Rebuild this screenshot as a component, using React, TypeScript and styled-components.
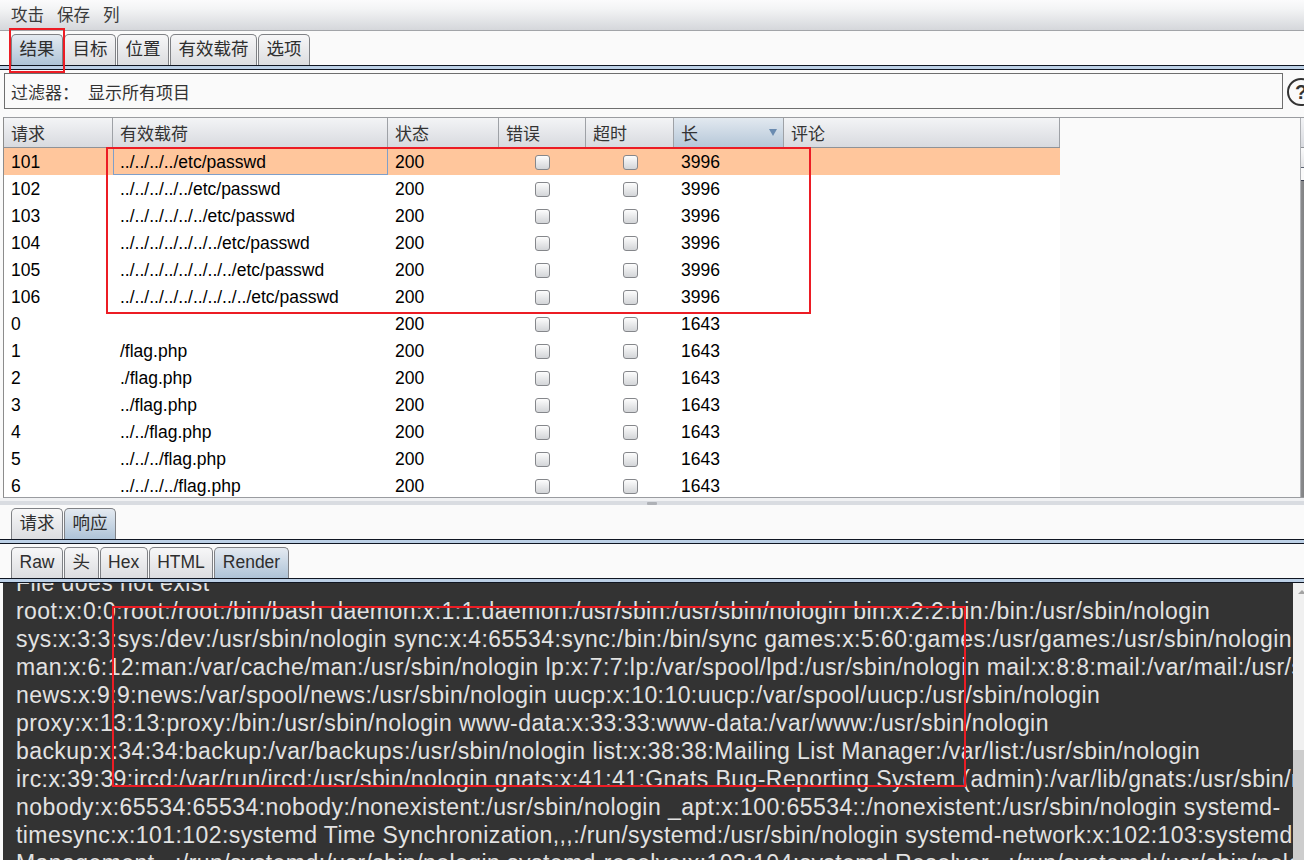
import React from 'react';
import styled, { createGlobalStyle } from 'styled-components';

const SANS = `"Liberation Sans", Arial, "Noto Sans CJK SC", sans-serif`;
const CJK = `"Noto Sans CJK SC", "Liberation Sans", sans-serif`;

const GlobalStyle = createGlobalStyle`
	html, body {
		margin: 0;
		padding: 0;
		background: #fafafa;
		overflow: hidden;
	}
	* {
		box-sizing: border-box;
	}
`;

const Page = styled.div`
	position: relative;
	width: 1304px;
	height: 860px;
	overflow: hidden;
	display: flex;
	flex-direction: column;
	background: #fafafa;
	font-family: ${SANS};
	color: #000;
`;

const MenuBar = styled.div`
	flex-shrink: 0;
	height: 31px;
	display: flex;
	align-items: center;
	gap: 13px;
	padding: 0 0 1px 11px;
	background: linear-gradient(#fbfbfc 0%, #f3f4f5 30%, #d5d7db 100%);
	border-bottom: 1px solid #a2a4a8;
	font-family: ${CJK};
	font-size: 16.5px;
	line-height: 1;
	color: #3a3a3a;
`;

const TabStrip = styled.div`
	flex-shrink: 0;
	display: flex;
	align-items: flex-end;
	gap: 1px;
	padding: ${(p: { $top: number }) => p.$top}px 0 0 11px;
`;

const Tab = styled.div<{ $active?: boolean }>`
	height: 31px;
	padding: 0 7.5px;
	display: flex;
	align-items: center;
	border: 1px solid #7f8185;
	border-bottom: none;
	border-radius: 5px 5px 0 0;
	background: ${(p) =>
		p.$active
			? 'linear-gradient(#e4eaf1, #aec3d7)'
			: 'linear-gradient(#f7f7f8, #dcdde0)'};
	font-size: 17.5px;
	line-height: 1;
	color: #2e2e2e;
	white-space: nowrap;
`;

const TabRule = styled.div`
	flex-shrink: 0;
	height: 5px;
	background: #bcd0e6;
	border-top: 1px solid #101622;
	border-bottom: 1px solid #101622;
`;

const FilterRow = styled.div`
	flex-shrink: 0;
	height: 47px;
	display: flex;
	align-items: flex-start;
	gap: 4px;
	padding: 3px 0 0 4px;
`;

const FilterBox = styled.div`
	flex-shrink: 0;
	width: 1279px;
	height: 36px;
	display: flex;
	align-items: center;
	gap: 9px;
	padding-left: 6px;
	border: 1px solid #6e6e6e;
	background: #fafafa;
	font-family: ${CJK};
	font-size: 17px;
	color: #333;
`;

const HelpButton = styled.div`
	flex-shrink: 0;
	width: 28px;
	height: 28px;
	margin-top: 5px;
	border: 2px solid #333;
	border-radius: 50%;
	display: flex;
	align-items: center;
	justify-content: center;
	font-size: 20px;
	font-weight: bold;
	color: #333;
`;

const TableFrame = styled.div`
	flex-shrink: 0;
	align-self: flex-start;
	width: 1314px;
	height: 381px;
	margin-left: 3px;
	display: flex;
	border-top: 1px solid #9a9ca0;
	border-left: 1px solid #8c8c8c;
	border-bottom: 1px solid #9a9ca0;
`;

const Viewport = styled.div`
	flex: 1;
	overflow: hidden;
	background: #fafafa;
`;

const COLS = '109px 275px 111px 87px 88px 110px 276px';

const Table = styled.div`
	width: 1056px;
	background: #fff;
`;

const HeaderRow = styled.div`
	display: grid;
	grid-template-columns: ${COLS};
	height: 30px;
	border-bottom: 1px solid #8f9297;
	background: #fafafa;
`;

const HeaderCell = styled.div<{ $sorted?: boolean }>`
	display: flex;
	align-items: center;
	justify-content: space-between;
	padding: 0 6px 0 7px;
	border-right: 1px solid #9ea1a6;
	background: ${(p) =>
		p.$sorted
			? 'linear-gradient(#e2e9f0, #b6c7d8)'
			: 'linear-gradient(#f3f4f6, #d8dadf)'};
	font-family: ${CJK};
	font-size: 17px;
	color: #333;
`;

const SortArrow = styled.span`
	width: 0;
	height: 0;
	border-left: 4.5px solid transparent;
	border-right: 4.5px solid transparent;
	border-top: 7px solid #6a8bb0;
`;

const Row = styled.div<{ $selected?: boolean }>`
	display: grid;
	grid-template-columns: ${COLS};
	height: 27px;
	background: ${(p) => (p.$selected ? '#ffc69c' : '#fff')};
	font-size: 17.5px;
	line-height: 27px;
	white-space: nowrap;
`;

const Cell = styled.div<{ $focus?: boolean; $center?: boolean }>`
	display: flex;
	align-items: center;
	justify-content: ${(p) => (p.$center ? 'center' : 'flex-start')};
	padding: 2px 0 0 ${(p) => (p.$center ? 0 : 7)}px;
	overflow: hidden;
	box-shadow: ${(p) => (p.$focus ? 'inset 0 0 0 1px #7f9fc9' : 'none')};
`;

const CheckBox = styled.span`
	width: 15px;
	height: 15px;
	border: 1px solid #85878b;
	border-radius: 3px;
	background: linear-gradient(#fdfdfd, #d3d5d8);
`;

const TableScroll = styled.div`
	width: 17px;
	flex-shrink: 0;
	display: flex;
	flex-direction: column;
	border-left: 1px solid #b0b2b6;
`;

const ScrollCorner = styled.div`
	height: 30px;
	background: linear-gradient(#f3f4f6, #d8dadf);
	border-bottom: 1px solid #8f9297;
`;

const ScrollButton = styled.div`
	height: 20px;
	background: linear-gradient(#fbfbfb, #e2e3e6);
	border-bottom: 1px solid #5a6270;
`;

const ScrollThumb = styled.div`
	flex: 1;
	margin: 12px 0 0;
	background: linear-gradient(90deg, #8a8b8d, #5d5e60);
	border-top: 1px solid #3b4150;
`;

const Splitter = styled.div`
	flex-shrink: 0;
	height: 7px;
	display: flex;
	justify-content: center;
	align-items: center;
	background: #d9dce1;
	border-top: 3px solid #f0f1f3;
`;

const Grip = styled.span`
	width: 10px;
	height: 3px;
	border-radius: 1px;
	background: #aeb1b6;
`;

const RenderPane = styled.div`
	flex: 1;
	align-self: flex-start;
	width: 1307px;
	margin-left: 3px;
	display: flex;
	min-height: 0;
`;

const RenderBody = styled.div`
	width: 1290px;
	flex-shrink: 0;
	overflow: hidden;
	background: #333333;
	padding-left: 13px;
	font-size: 23px;
	letter-spacing: 0.43px;
	line-height: 28px;
	color: #e2e2e2;
	white-space: nowrap;
`;

const RenderText = styled.div`
	margin-top: -14px;
`;

const RenderScroll = styled.div`
	width: 17px;
	flex-shrink: 0;
	display: flex;
	flex-direction: column;
	justify-content: space-between;
	background: #f0f0f0;
`;

const UpArrow = styled.div`
	height: 17px;
	display: flex;
	align-items: center;
	justify-content: center;

	&::before {
		content: '';
		border-left: 4px solid transparent;
		border-right: 4px solid transparent;
		border-bottom: 4px solid #a3a3a3;
	}
`;

const RenderThumb = styled.div`
	height: 110px;
	margin: 0 2px 0 0;
	background: #cdcdcd;
`;

const Annotation = styled.div`
	position: absolute;
	border: 2px solid #ec1c24;
	pointer-events: none;
`;

const passwdRows = [4, 5, 6, 7, 8, 9].map((n, i) => ({
	id: String(101 + i),
	payload: '../'.repeat(n) + 'etc/passwd',
	length: '3996',
}));

const flagRows = [
	'',
	'/flag.php',
	'./flag.php',
	'../flag.php',
	'../../flag.php',
	'../../../flag.php',
	'../../../../flag.php',
].map((payload, i) => ({ id: String(i), payload, length: '1643' }));

const rows = [...passwdRows, ...flagRows];

const renderLines = [
	'File does not exist',
	'root:x:0:0:root:/root:/bin/bash daemon:x:1:1:daemon:/usr/sbin:/usr/sbin/nologin bin:x:2:2:bin:/bin:/usr/sbin/nologin',
	'sys:x:3:3:sys:/dev:/usr/sbin/nologin sync:x:4:65534:sync:/bin:/bin/sync games:x:5:60:games:/usr/games:/usr/sbin/nologin',
	'man:x:6:12:man:/var/cache/man:/usr/sbin/nologin lp:x:7:7:lp:/var/spool/lpd:/usr/sbin/nologin mail:x:8:8:mail:/var/mail:/usr/sbin/nologin',
	'news:x:9:9:news:/var/spool/news:/usr/sbin/nologin uucp:x:10:10:uucp:/var/spool/uucp:/usr/sbin/nologin',
	'proxy:x:13:13:proxy:/bin:/usr/sbin/nologin www-data:x:33:33:www-data:/var/www:/usr/sbin/nologin',
	'backup:x:34:34:backup:/var/backups:/usr/sbin/nologin list:x:38:38:Mailing List Manager:/var/list:/usr/sbin/nologin',
	'irc:x:39:39:ircd:/var/run/ircd:/usr/sbin/nologin gnats:x:41:41:Gnats Bug-Reporting System (admin):/var/lib/gnats:/usr/sbin/nologin',
	'nobody:x:65534:65534:nobody:/nonexistent:/usr/sbin/nologin _apt:x:100:65534::/nonexistent:/usr/sbin/nologin systemd-',
	'timesync:x:101:102:systemd Time Synchronization,,,:/run/systemd:/usr/sbin/nologin systemd-network:x:102:103:systemd Network',
	'Management,,,:/run/systemd:/usr/sbin/nologin systemd-resolve:x:103:104:systemd Resolver,,,:/run/systemd:/usr/sbin/nologin',
];

const columns = ['请求', '有效载荷', '状态', '错误', '超时', '长', '评论'];

export default function App() {
	return (
		<Page>
			<GlobalStyle />

			<MenuBar>
				<span>攻击</span>
				<span>保存</span>
				<span>列</span>
			</MenuBar>

			<TabStrip $top={3}>
				<Tab $active>结果</Tab>
				<Tab>目标</Tab>
				<Tab>位置</Tab>
				<Tab>有效载荷</Tab>
				<Tab>选项</Tab>
			</TabStrip>
			<TabRule />

			<FilterRow>
				<FilterBox>
					<span>过滤器：</span>
					<span>显示所有项目</span>
				</FilterBox>
				<HelpButton>?</HelpButton>
			</FilterRow>

			<TableFrame>
				<Viewport>
					<Table>
						<HeaderRow>
							{columns.map((c) => (
								<HeaderCell key={c} $sorted={c === '长'}>
									<span>{c}</span>
									{c === '长' && <SortArrow />}
								</HeaderCell>
							))}
						</HeaderRow>
						{rows.map((r, i) => (
							<Row key={r.id} $selected={i === 0}>
								<Cell>{r.id}</Cell>
								<Cell $focus={i === 0}>{r.payload}</Cell>
								<Cell>200</Cell>
								<Cell $center>
									<CheckBox />
								</Cell>
								<Cell $center>
									<CheckBox />
								</Cell>
								<Cell>{r.length}</Cell>
								<Cell />
							</Row>
						))}
					</Table>
				</Viewport>
				<TableScroll>
					<ScrollCorner />
					<ScrollButton />
					<ScrollThumb />
				</TableScroll>
			</TableFrame>

			<Splitter>
				<Grip />
			</Splitter>

			<TabStrip $top={3}>
				<Tab>请求</Tab>
				<Tab $active>响应</Tab>
			</TabStrip>
			<TabRule />

			<TabStrip $top={3}>
				<Tab>Raw</Tab>
				<Tab>头</Tab>
				<Tab>Hex</Tab>
				<Tab>HTML</Tab>
				<Tab $active>Render</Tab>
			</TabStrip>
			<TabRule />

			<RenderPane>
				<RenderBody>
					<RenderText>
						{renderLines.map((line, i) => (
							<div key={i}>{line}</div>
						))}
					</RenderText>
				</RenderBody>
				<RenderScroll>
					<UpArrow />
					<RenderThumb />
				</RenderScroll>
			</RenderPane>

			<Annotation style={{ left: 9, top: 28, width: 56, height: 45 }} />
			<Annotation style={{ left: 106, top: 147, width: 705, height: 167 }} />
			<Annotation style={{ left: 112, top: 606, width: 854, height: 181 }} />
		</Page>
	);
}
